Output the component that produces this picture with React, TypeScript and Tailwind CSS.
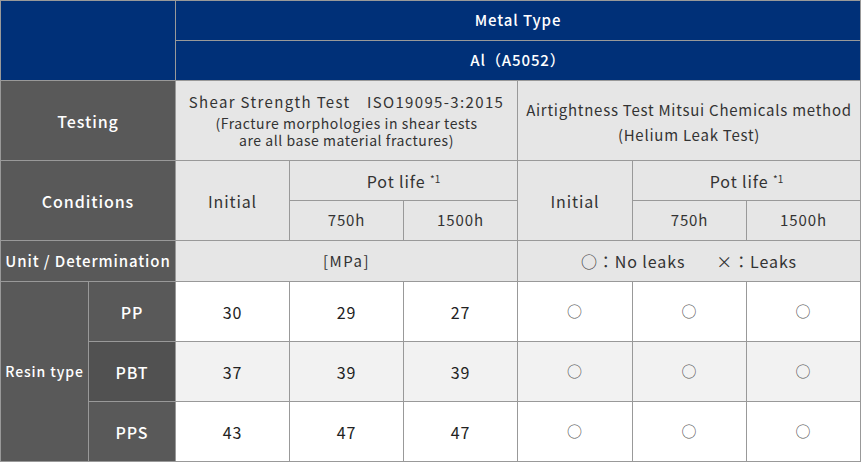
export default function App() {
  const navy = "bg-[#003078] text-white font-medium"
  const dark = "bg-[#595959] text-white font-medium"
  const light = "bg-[#e6e6e6] text-[#333]"
  const cell = "flex items-center justify-center text-center"

  const rows = [
    { name: "PP", values: ["30", "29", "27"], stripe: false },
    { name: "PBT", values: ["37", "39", "39"], stripe: true },
    { name: "PPS", values: ["43", "47", "47"], stripe: false },
  ]

  const potLife = (
    <span>
      Pot life <span className="relative -top-[5px] text-[10px] tracking-normal">*1</span>
    </span>
  )

  return (
    <div
      className="w-[861px] h-[462px] bg-white"
      style={{ fontFamily: '"Noto Sans CJK JP", "Noto Sans", sans-serif' }}
    >
      <div className="grid grid-cols-[87px_86px_113px_113px_113px_114px_113px_113px] grid-rows-[39px_39px_79px_39px_39px_40px_59px_59px_59px] gap-px p-px bg-[#999] text-[15px] tracking-[0.06em]">
        {/* Header */}
        <div className={`${navy} col-span-2 row-span-2`} />
        <div className={`${navy} ${cell} col-span-6`}>Metal Type</div>
        <div className={`${navy} ${cell} col-span-6`}>Al（A5052）</div>

        {/* Testing */}
        <div className={`${dark} ${cell} col-span-2 text-[16px]`}>Testing</div>
        <div className={`${light} ${cell} col-span-3 flex-col`}>
          <div className="leading-[20px] tracking-[0.09em]">Shear Strength Test　ISO19095-3:2015</div>
          <div className="text-[14px] leading-[17px] mt-[3px] tracking-[0.04em]">
            (Fracture morphologies in shear tests
            <br />
            are all base material fractures)
          </div>
        </div>
        <div className={`${light} ${cell} col-span-3 flex-col leading-[25px] tracking-[0.05em] pt-[2px]`}>
          <div>Airtightness Test Mitsui Chemicals method</div>
          <div>(Helium Leak Test)</div>
        </div>

        {/* Conditions */}
        <div className={`${dark} ${cell} col-span-2 row-span-2 text-[16px]`}>Conditions</div>
        <div className={`${light} ${cell} row-span-2 text-[16px]`}>Initial</div>
        <div className={`${light} ${cell} col-span-2 text-[16px]`}>{potLife}</div>
        <div className={`${light} ${cell} row-span-2 text-[16px]`}>Initial</div>
        <div className={`${light} ${cell} col-span-2 text-[16px]`}>{potLife}</div>
        <div className={`${light} ${cell}`}>750h</div>
        <div className={`${light} ${cell}`}>1500h</div>
        <div className={`${light} ${cell}`}>750h</div>
        <div className={`${light} ${cell}`}>1500h</div>

        {/* Unit */}
        <div className={`${dark} ${cell} col-span-2`}>Unit / Determination</div>
        <div className={`${light} ${cell} col-span-3 tracking-[0.1em]`}>[MPa]</div>
        <div className={`${light} ${cell} col-span-3 text-[16px]`}>
          <span>○：No leaks</span>
          <span className="ml-[31px]">×：Leaks</span>
        </div>

        {/* Resin rows */}
        <div className={`${dark} ${cell} row-span-3 text-[14px] row-start-7`}>Resin type</div>
        {rows.map((r) => (
          <>
            <div
              key={r.name}
              className={`${cell} text-white font-medium text-[16px] ${r.stripe ? "bg-[#515151]" : "bg-[#595959]"}`}
            >
              {r.name}
            </div>
            {r.values.map((v, i) => (
              <div
                key={r.name + i}
                className={`${cell} text-[#222] text-[16px] ${r.stripe ? "bg-[#f2f2f2]" : "bg-white"}`}
              >
                {v}
              </div>
            ))}
            {[0, 1, 2].map((i) => (
              <div
                key={r.name + "c" + i}
                className={`${cell} text-[#555] text-[15px] ${r.stripe ? "bg-[#f2f2f2]" : "bg-white"}`}
              >
                ○
              </div>
            ))}
          </>
        ))}
      </div>
    </div>
  )
}
